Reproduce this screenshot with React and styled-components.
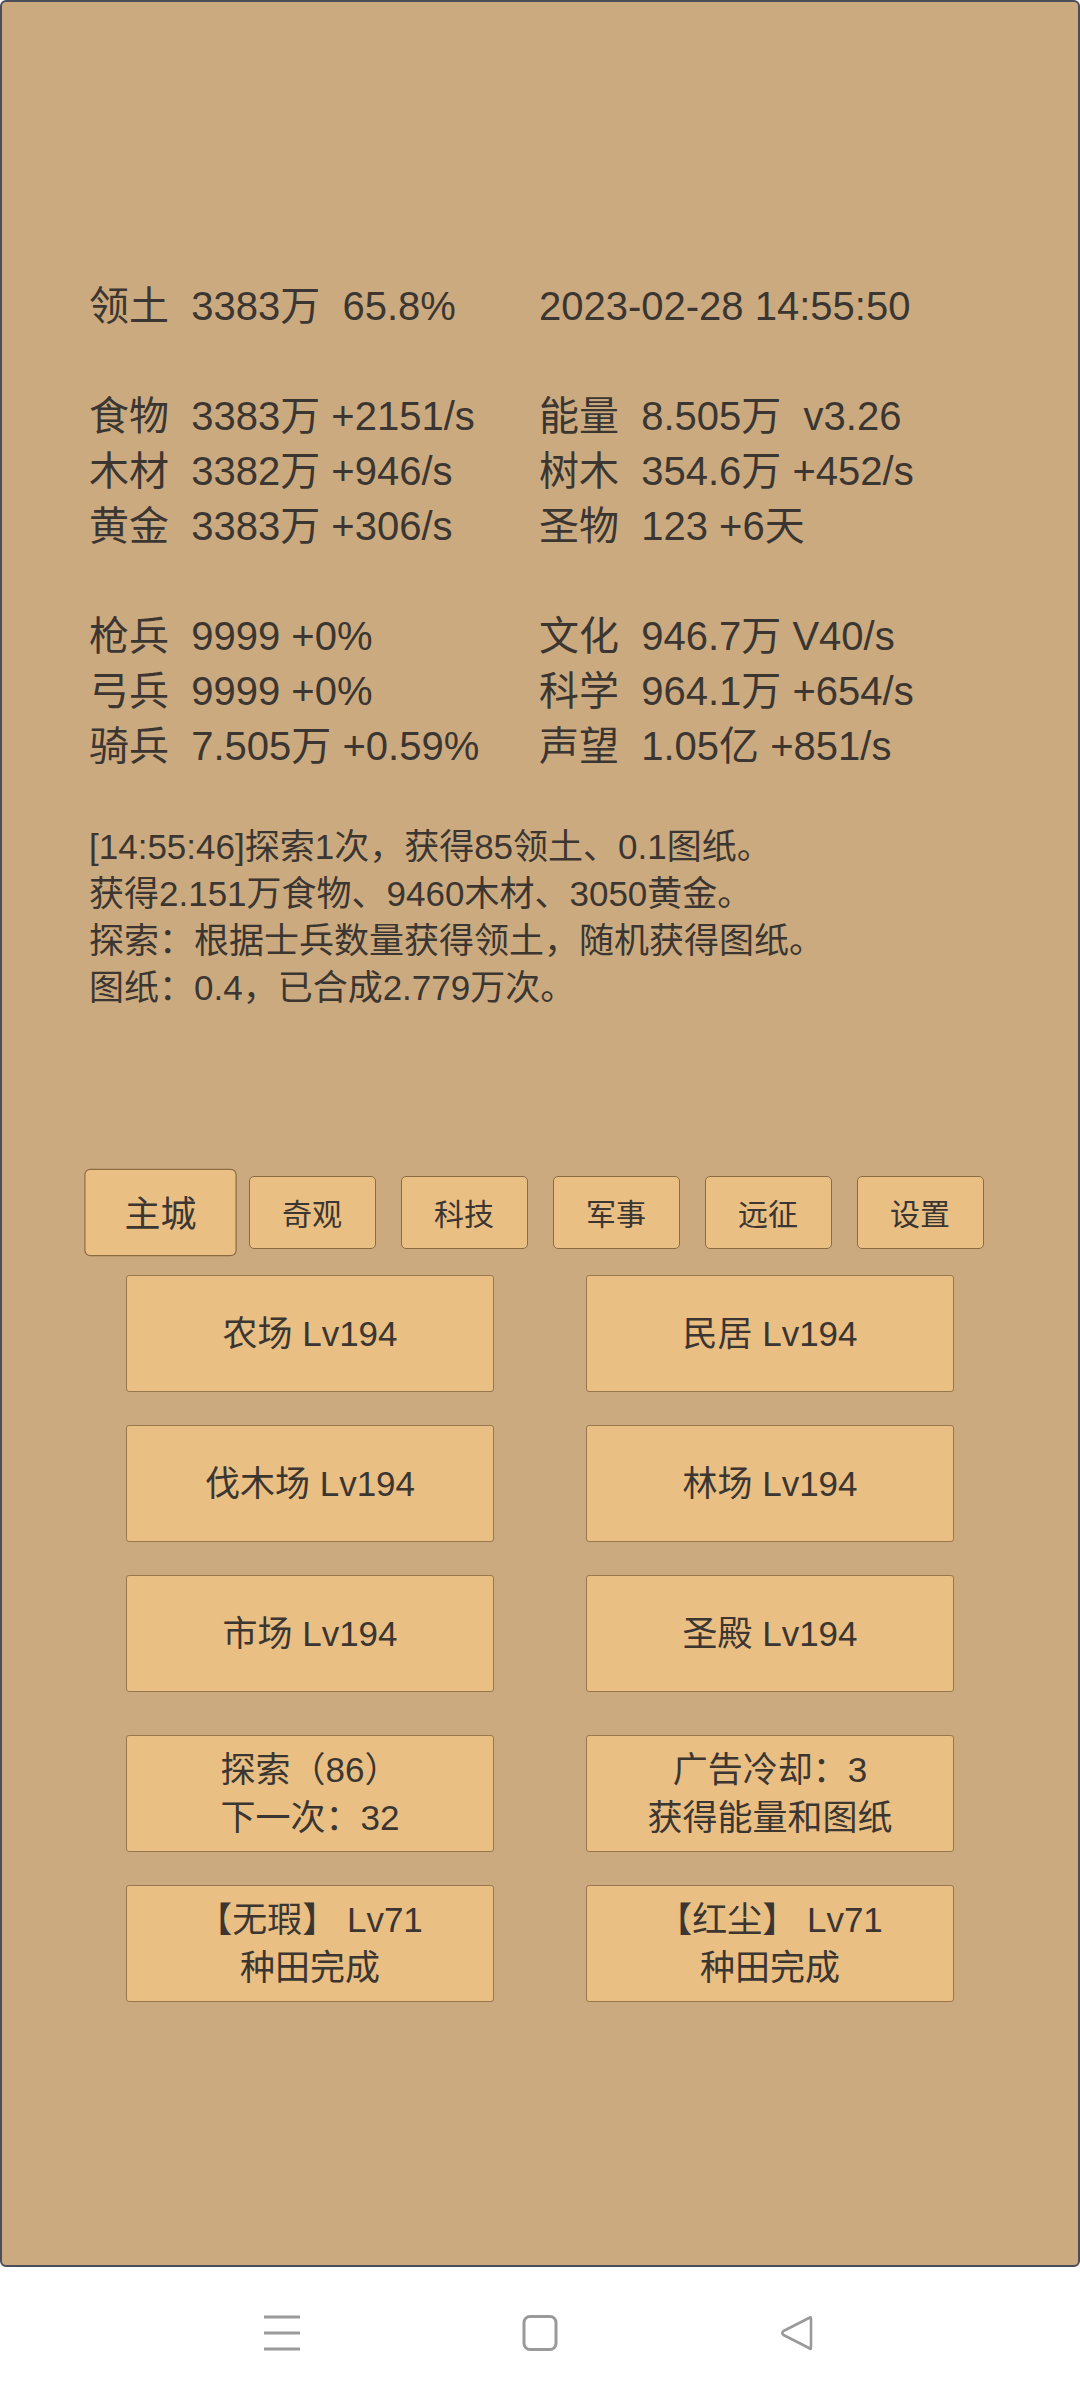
import React from "react";
import styled, { createGlobalStyle } from "styled-components";

const GlobalStyle = createGlobalStyle`
  html, body {
    margin: 0;
    padding: 0;
    background: #ffffff;
  }
  body {
    font-family: "Liberation Sans", "Noto Sans CJK SC", sans-serif;
    color: #3b3631;
  }
`;

const Screen = styled.div`
  width: 1080px;
  height: 2400px;
  display: flex;
  flex-direction: column;
`;

const Frame = styled.div`
  height: 2267px;
  box-sizing: border-box;
  border: 2px solid #4b4d5a;
  border-radius: 6px;
  background: #cbaa80;
  padding-top: 277px;
`;

const Info = styled.div`
  padding-left: 87px;
`;

const StatGrid = styled.div`
  display: grid;
  grid-template-columns: 450px 1fr;
  font-size: 40px;
  line-height: 55px;
  white-space: pre;
`;

const StatLine = styled.div`
  height: 55px;
`;

const Log = styled.div`
  margin-top: 49px;
  font-size: 35px;
  line-height: 47px;
`;

const TabBar = styled.div`
  margin-top: 165px;
  display: flex;
  justify-content: center;
  gap: 25px;
`;

const Tab = styled.div`
  width: 127px;
  height: 73px;
  box-sizing: border-box;
  display: flex;
  align-items: center;
  justify-content: center;
  padding-bottom: 2px;
  background: #e9bf84;
  border: 1px solid #8c6b42;
  border-radius: 5px;
  font-size: 30px;
  transform: ${(p) => (p.$active ? "scale(1.2)" : "none")};
`;

const ButtonGrid = styled.div`
  margin-top: ${(p) => p.$top}px;
  display: grid;
  grid-template-columns: 368px 368px;
  justify-content: center;
  column-gap: 92px;
  row-gap: 33px;
`;

const Building = styled.div`
  height: 117px;
  box-sizing: border-box;
  display: flex;
  flex-direction: column;
  align-items: center;
  justify-content: center;
  background: #e9bf84;
  border: 1px solid #97774b;
  border-radius: 3px;
  font-size: 35px;
  line-height: 48px;
  white-space: pre;
`;

const NavBar = styled.div`
  flex: 1;
  display: flex;
  align-items: center;
  justify-content: center;
  gap: 222px;
  padding-bottom: 1px;
`;

const NavIcon = styled.svg`
  width: 36px;
  height: 36px;
  display: block;
`;

const stats = [
  ["领土  3383万  65.8%", "2023-02-28 14:55:50"],
  ["", ""],
  ["食物  3383万 +2151/s", "能量  8.505万  v3.26"],
  ["木材  3382万 +946/s", "树木  354.6万 +452/s"],
  ["黄金  3383万 +306/s", "圣物  123 +6天"],
  ["", ""],
  ["枪兵  9999 +0%", "文化  946.7万 V40/s"],
  ["弓兵  9999 +0%", "科学  964.1万 +654/s"],
  ["骑兵  7.505万 +0.59%", "声望  1.05亿 +851/s"],
];

const logLines = [
  "[14:55:46]探索1次，获得85领土、0.1图纸。",
  "获得2.151万食物、9460木材、3050黄金。",
  "探索：根据士兵数量获得领土，随机获得图纸。",
  "图纸：0.4，已合成2.779万次。",
];

const tabs = ["主城", "奇观", "科技", "军事", "远征", "设置"];

const buildings = [
  "农场 Lv194",
  "民居 Lv194",
  "伐木场 Lv194",
  "林场 Lv194",
  "市场 Lv194",
  "圣殿 Lv194",
];

const actions = [
  ["探索（86）", "下一次：32"],
  ["广告冷却：3", "获得能量和图纸"],
  ["【无瑕】 Lv71", "种田完成"],
  ["【红尘】 Lv71", "种田完成"],
];

const App = () => {
  return (
    <Screen>
      <GlobalStyle />
      <Frame>
        <Info>
          <StatGrid>
            {stats.map(([left, right], i) => (
              <React.Fragment key={i}>
                <StatLine>{left}</StatLine>
                <StatLine>{right}</StatLine>
              </React.Fragment>
            ))}
          </StatGrid>
          <Log>
            {logLines.map((line) => (
              <div key={line}>{line}</div>
            ))}
          </Log>
        </Info>

        <TabBar>
          {tabs.map((t, i) => (
            <Tab key={t} $active={i === 0}>
              {t}
            </Tab>
          ))}
        </TabBar>

        <ButtonGrid $top={26}>
          {buildings.map((b) => (
            <Building key={b}>{b}</Building>
          ))}
        </ButtonGrid>

        <ButtonGrid $top={43}>
          {actions.map(([a, b]) => (
            <Building key={a}>
              <div>{a}</div>
              <div>{b}</div>
            </Building>
          ))}
        </ButtonGrid>
      </Frame>

      <NavBar>
        <NavIcon viewBox="0 0 36 36">
          <g stroke="#9a9a9a" strokeWidth="3">
            <line x1="0" y1="2" x2="36" y2="2" />
            <line x1="0" y1="18" x2="36" y2="18" />
            <line x1="0" y1="34" x2="36" y2="34" />
          </g>
        </NavIcon>
        <NavIcon viewBox="0 0 36 36">
          <rect
            x="2"
            y="1.5"
            width="32"
            height="33"
            rx="6"
            fill="none"
            stroke="#9a9a9a"
            strokeWidth="3"
          />
        </NavIcon>
        <NavIcon viewBox="0 0 36 36">
          <path
            d="M31 3.5 L31 32.5 Q31 35 29 33 L3.5 20 Q1 18 3.5 16 L29 3 Q31 1.5 31 3.5 Z"
            fill="none"
            stroke="#9a9a9a"
            strokeWidth="2.6"
            strokeLinejoin="round"
          />
        </NavIcon>
      </NavBar>
    </Screen>
  );
};

export default App;
